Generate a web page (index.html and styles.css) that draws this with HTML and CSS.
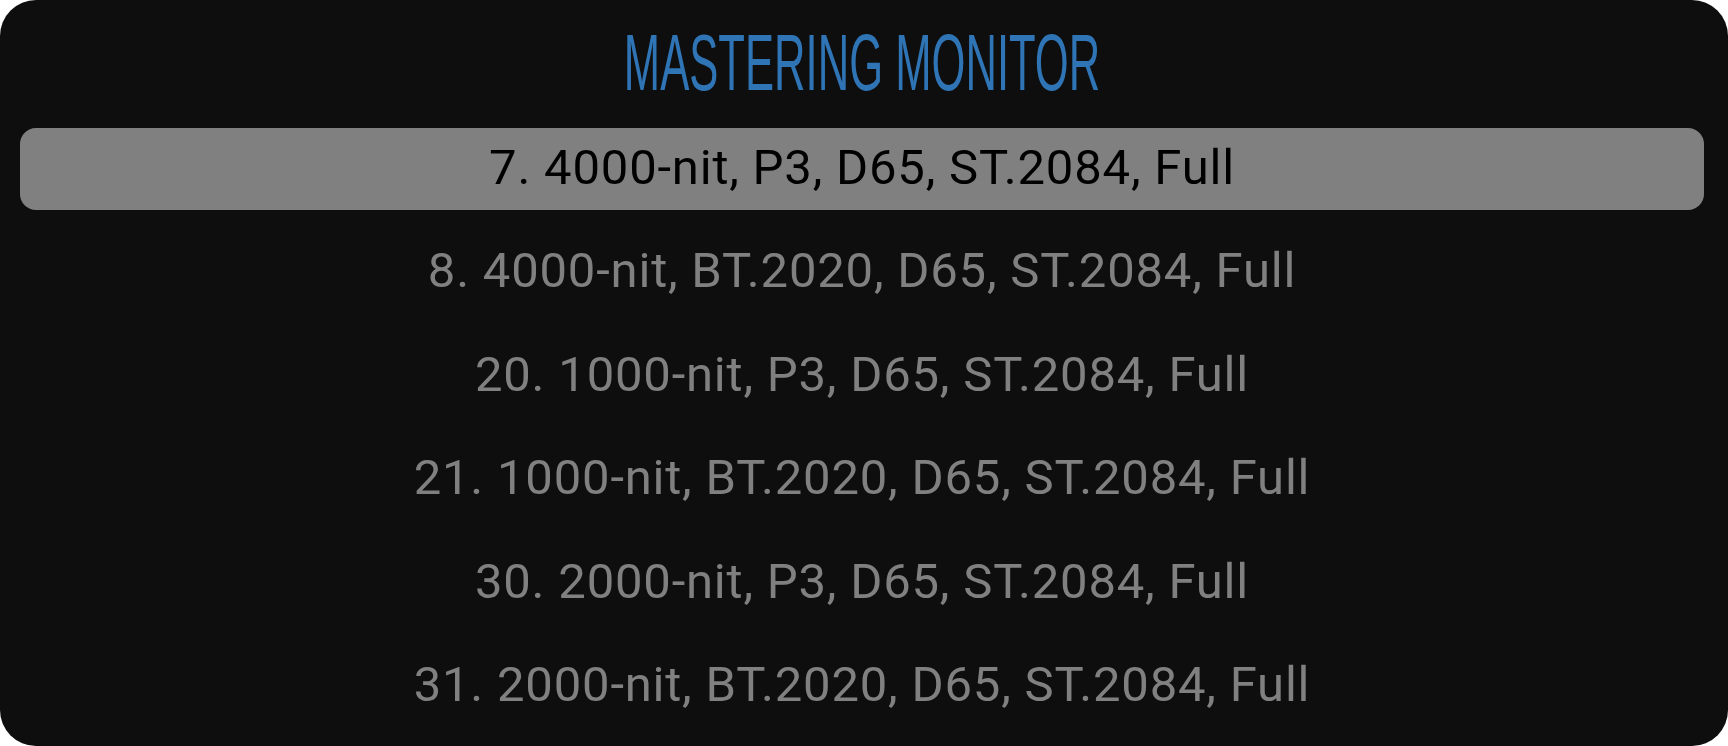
FILE: index.html
```html
<!DOCTYPE html>
<html>
<head>
<meta charset="utf-8">
<link rel="stylesheet" href="styles.css">
</head>
<body>
<div class="panel">
  <h1 class="title"><span>MASTERING MONITOR</span></h1>
  <ul class="list">
    <li class="item selected">7. 4000-nit, P3, D65, ST.2084, Full</li>
    <li class="item">8. 4000-nit, BT.2020, D65, ST.2084, Full</li>
    <li class="item">20. 1000-nit, P3, D65, ST.2084, Full</li>
    <li class="item">21. 1000-nit, BT.2020, D65, ST.2084, Full</li>
    <li class="item">30. 2000-nit, P3, D65, ST.2084, Full</li>
    <li class="item">31. 2000-nit, BT.2020, D65, ST.2084, Full</li>
  </ul>
</div>
</body>
</html>
```
FILE: styles.css
```css
html, body {
  margin: 0;
  padding: 0;
  background: #ffffff;
}
.panel {
  width: 1728px;
  height: 746px;
  box-sizing: border-box;
  background: #0e0e0e;
  border-radius: 36px;
  padding: 23px 24px 0 20px;
  overflow: hidden;
}
.title {
  margin: 0 0 25px 0;
  height: 80px;
  font-family: "Liberation Sans", sans-serif;
  font-weight: normal;
  font-size: 80px;
  line-height: 80px;
  color: #2f74b5;
  text-align: center;
  white-space: nowrap;
}
.title span {
  display: inline-block;
  transform: scaleX(0.545);
  transform-origin: center;
}
.list {
  list-style: none;
  margin: 0;
  padding: 0;
  display: flex;
  flex-direction: column;
  gap: 21.4px;
}
.item {
  height: 82px;
  box-sizing: border-box;
  padding-bottom: 3px;
  display: flex;
  align-items: center;
  justify-content: center;
  font-family: Roboto, "Liberation Sans", sans-serif;
  font-size: 49px;
  letter-spacing: 0.8px;
  color: #808080;
  border-radius: 16px;
  white-space: nowrap;
}
.item.selected {
  background: #808080;
  color: #000000;
}
```
